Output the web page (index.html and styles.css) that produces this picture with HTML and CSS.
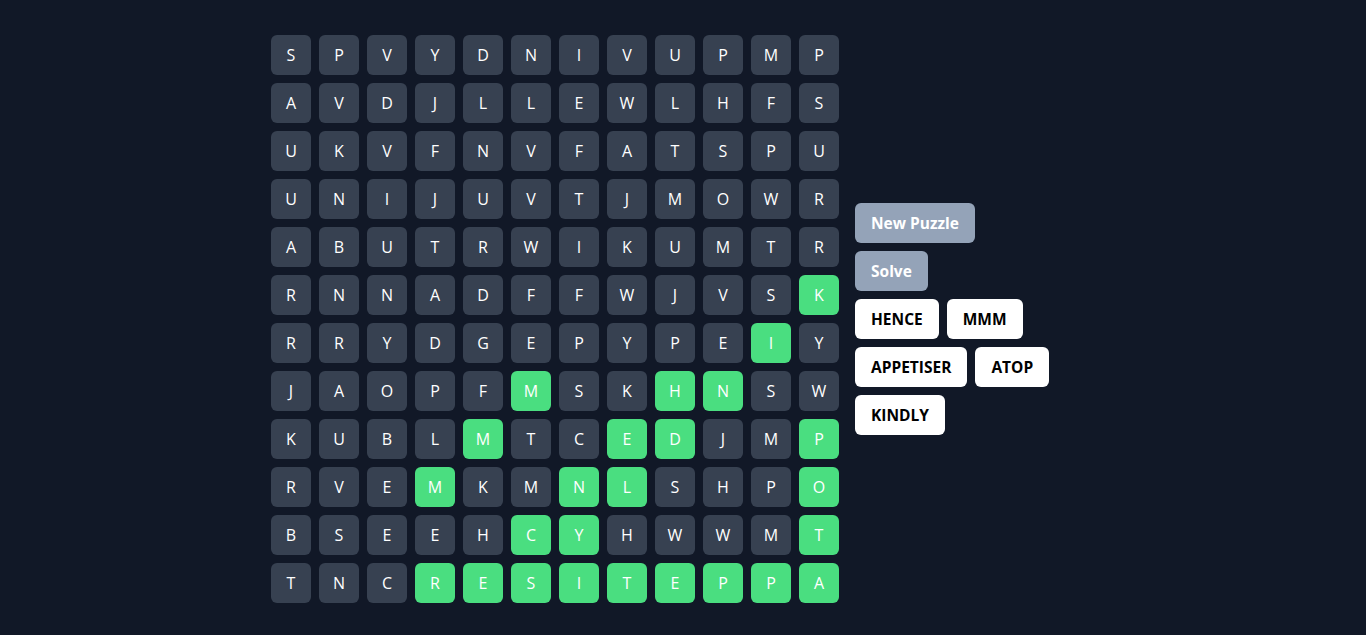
FILE: index.html
```html
<!DOCTYPE html>
<html>
<head>
<meta charset="utf-8">
<link rel="stylesheet" href="styles.css">
</head>
<body>
<main class="app">
  <div class="grid" id="grid"></div>
  <aside class="panel">
    <button class="btn btn-muted">New Puzzle</button>
    <button class="btn btn-muted">Solve</button>
    <div class="words">
      <button class="btn btn-word">HENCE</button>
      <button class="btn btn-word">MMM</button>
      <button class="btn btn-word">APPETISER</button>
      <button class="btn btn-word">ATOP</button>
      <button class="btn btn-word">KINDLY</button>
    </div>
  </aside>
</main>
<script src="app.js"></script>
</body>
</html>
```
FILE: app.js
```js
const rows = [
  "SPVYDNIVUPMP",
  "AVDJLLEWLHFS",
  "UKVFNVFATSPU",
  "UNIJUVTJMOWR",
  "ABUTRWIKUMTR",
  "RNNADFFWJVSK",
  "RRYDGEPYPEIY",
  "JAOPFMSKHNSW",
  "KUBLMTCEDJMP",
  "RVEMKMNLSHPO",
  "BSEEHCYHWWMT",
  "TNCRESITEPPA"
];
const found = new Set([
  "5,11","6,10","7,5","7,8","7,9","8,4","8,7","8,8","8,11",
  "9,3","9,6","9,7","9,11","10,5","10,6","10,11",
  "11,3","11,4","11,5","11,6","11,7","11,8","11,9","11,10","11,11"
]);
const grid = document.getElementById("grid");
rows.forEach((row, r) => {
  [...row].forEach((ch, c) => {
    const d = document.createElement("div");
    d.className = "cell" + (found.has(r + "," + c) ? " cell-found" : "");
    d.textContent = ch;
    grid.appendChild(d);
  });
});
```
FILE: styles.css
```css
html, body {
  margin: 0;
  padding: 0;
  background: #111827;
  height: 100%;
}
body {
  font-family: "Open Sans", "Noto Sans", sans-serif;
}
.app {
  box-sizing: border-box;
  min-height: 100vh;
  padding-top: 2px;
  display: flex;
  align-items: center;
  justify-content: center;
  gap: 16px;
}
.grid {
  display: grid;
  grid-template-columns: repeat(12, 40px);
  grid-auto-rows: 40px;
  gap: 8px;
}
.cell {
  background: #374151;
  color: #ffffff;
  border-radius: 6px;
  display: flex;
  align-items: center;
  justify-content: center;
  font-size: 16px;
}
.cell-found {
  background: #4ade80;
}
.panel {
  width: 240px;
  display: flex;
  flex-direction: column;
  align-items: flex-start;
  gap: 8px;
}
.words {
  display: flex;
  flex-wrap: wrap;
  gap: 8px;
}
.btn {
  height: 40px;
  padding: 0 16px;
  border: none;
  border-radius: 6px;
  font-family: "Open Sans", "Noto Sans", sans-serif;
  font-weight: 700;
  font-size: 15.5px;
  cursor: pointer;
}
.btn-muted {
  background: #94a3b8;
  color: #ffffff;
}
.btn-word {
  background: #ffffff;
  color: #000000;
}
```
